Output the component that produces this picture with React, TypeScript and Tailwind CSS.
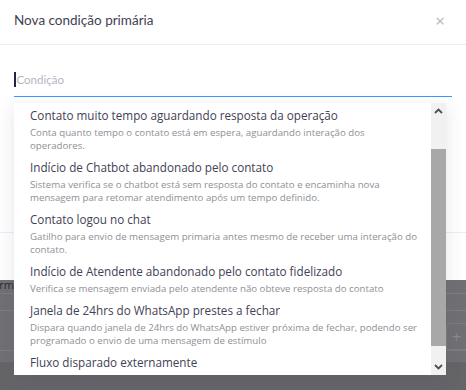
import React from 'react';

const options = [
  {
    title: 'Contato muito tempo aguardando resposta da operação',
    desc: 'Conta quanto tempo o contato está em espera, aguardando interação dos operadores.',
  },
  {
    title: 'Indício de Chatbot abandonado pelo contato',
    desc: 'Sistema verifica se o chatbot está sem resposta do contato e encaminha nova mensagem para retomar atendimento após um tempo definido.',
  },
  {
    title: 'Contato logou no chat',
    desc: 'Gatilho para envio de mensagem primaria antes mesmo de receber uma interação do contato.',
  },
  {
    title: 'Indício de Atendente abandonado pelo contato fidelizado',
    desc: 'Verifica se mensagem enviada pelo atendente não obteve resposta do contato',
  },
  {
    title: 'Janela de 24hrs do WhatsApp prestes a fechar',
    desc: 'Dispara quando janela de 24hrs do WhatsApp estiver próxima de fechar, podendo ser programado o envio de uma mensagem de estímulo',
  },
  {
    title: 'Fluxo disparado externamente',
    desc: '',
  },
];

const Chevron = ({ up }: { up?: boolean }) => (
  <svg width="9" height="6" viewBox="0 0 9 6" className={up ? '' : 'rotate-180'}>
    <path d="M1 5 L4.5 1.5 L8 5" fill="none" stroke="#505050" strokeWidth="1.8" />
  </svg>
);

export default function App() {
  return (
    <div className="relative w-[466px] h-[390px] overflow-hidden bg-[#707073] font-['Open_Sans',sans-serif]">
      {/* modal */}
      <div className="h-[280px] bg-white flex flex-col">
        <div className="h-[45px] px-[14px] pb-[3px] flex items-center justify-between border-b border-[#ebedf3]">
          <h3 className="font-['Lato',sans-serif] text-[13.5px] text-[#3f4254]">Nova condição primária</h3>
          <span className="mr-[7px] text-[#b5b5c3] text-[17px] leading-none">×</span>
        </div>
        <div className="px-[14px] pt-[19px] h-[187px]">
          <div className="h-[33px] border-b border-[#3699ff] flex items-center gap-[1px] pb-[1px]">
            <span className="w-[1.5px] h-[15px] bg-[#1f2740]" />
            <span className="font-['Lato',sans-serif] text-[11.5px] text-[#b5b5c3]">Condição</span>
          </div>
        </div>
        <div className="flex-1 border-t border-[#ebedf3]" />
      </div>

      {/* page behind overlay */}
      <div className="flex flex-col">
        <div className="h-[13px] flex">
          <span className="w-[14px] overflow-hidden flex justify-end text-[11px] leading-[10px] text-[#2c2c30]">erm</span>
        </div>
        <div className="h-[17px] border-t border-[#7d7d80]" />
        <div className="h-[13px] border-t border-[#7d7d80]" />
        <div className="h-[27px] flex justify-end">
          <div className="w-[20px] rounded-l-[4px] border-l border-y border-[#7d7d80] flex items-center justify-center text-[#8a8a8d] text-[16px] leading-none">+</div>
        </div>
        <div className="h-[12px] border-t border-[#7d7d80]" />
        <div className="h-[30px] bg-[#656568]" />
      </div>

      {/* dropdown menu */}
      <div className="absolute left-[14px] top-[103px] w-[432px] h-[272px] bg-white flex shadow-[0_4px_16px_rgba(82,63,105,0.15)]">
        <div className="flex-1 overflow-hidden">
          {options.map((o) => (
            <div key={o.title} className="pl-[16px] pr-[12px] pt-[3px] pb-[3px]">
              <div className="text-[11.7px] leading-[18px] text-[#3f4254]">{o.title}</div>
              {o.desc && (
                <div className="mt-[2px] text-[9.7px] leading-[13px] text-[#8f8f95]">{o.desc}</div>
              )}
            </div>
          ))}
        </div>
        <div className="w-[15px] bg-[#f1f1f1] flex flex-col">
          <div className="h-[16px] flex items-center justify-center">
            <Chevron up />
          </div>
          <div className="h-[30px]" />
          <div className="h-[197px] bg-[#a8a8a8]" />
          <div className="flex-1 flex items-end justify-center pb-[5px]">
            <Chevron />
          </div>
        </div>
      </div>
    </div>
  );
}
